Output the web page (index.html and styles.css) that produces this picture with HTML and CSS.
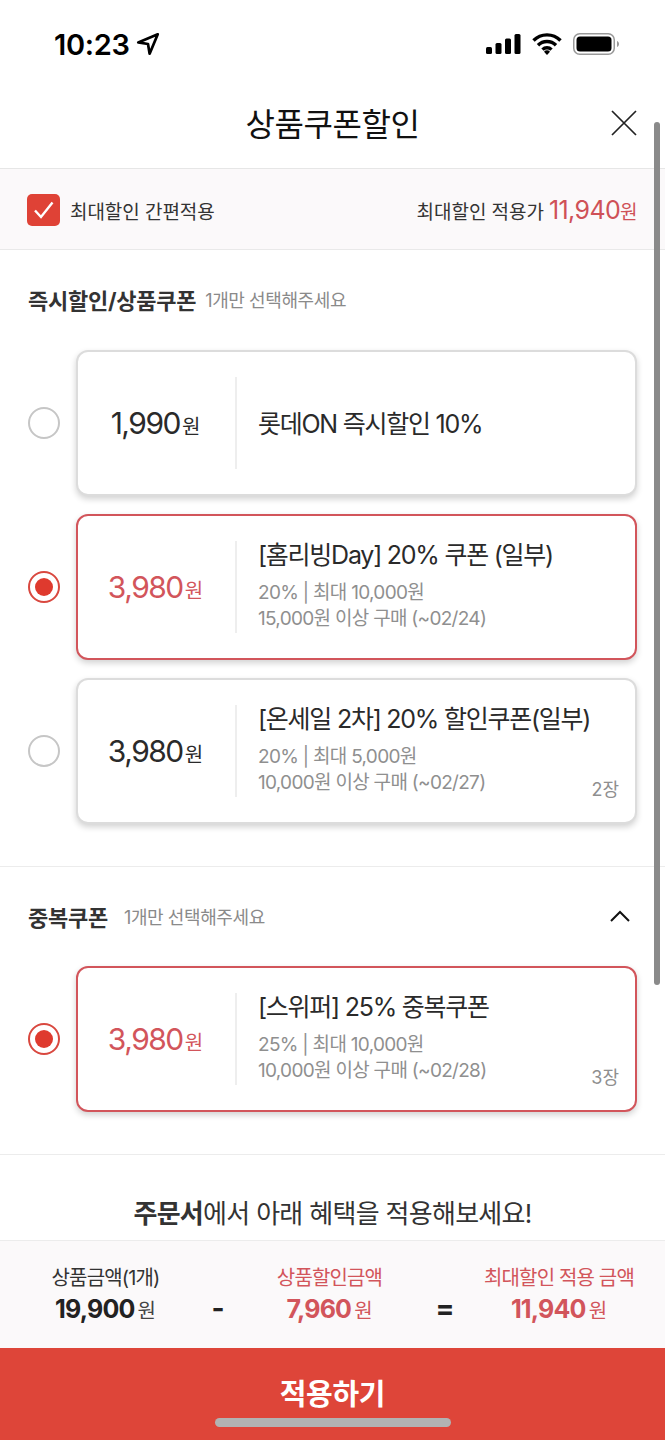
FILE: index.html
```html
<!DOCTYPE html>
<html lang="ko">
<head>
<meta charset="utf-8">
<title>상품쿠폰할인</title>
<link rel="stylesheet" href="styles.css">
</head>
<body>
<div class="screen">
  <div class="status">
    <div class="time"><span>10:23</span>
      <svg class="loc" width="26" height="26" viewBox="0 0 24 24"><path d="M21 3 3 10.5l9 1.5 1.5 9z" fill="none" stroke="#000" stroke-width="2.500" stroke-linejoin="round"/></svg>
    </div>
    <div class="sys">
      <svg width="35" height="22" viewBox="0 0 35 22"><rect x="0" y="14" width="6" height="7" rx="1.5"/><rect x="9.5" y="10" width="6" height="11" rx="1.5"/><rect x="19" y="5.5" width="6" height="15.5" rx="1.5"/><rect x="28.5" y="1" width="6" height="20" rx="1.5"/></svg>
      <svg width="30" height="22" viewBox="0 0 30 22"><path d="M1.5 7.5a19 19 0 0 1 27 0M6 12.3a12.7 12.7 0 0 1 18 0M10.5 16.6a6.4 6.4 0 0 1 9 0" fill="none" stroke="#000" stroke-width="3.4"/><path d="M15 22l-3-3.3a4 4 0 0 1 6 0z"/></svg>
      <svg width="47" height="22" viewBox="0 0 47 22"><rect x=".75" y=".75" width="40.5" height="20.5" rx="6" fill="none" stroke="#999" stroke-width="1.5"/><rect x="3.5" y="3.5" width="35" height="15" rx="3.5"/><path d="M44 8v6c1.4-.6 2-1.7 2-3s-.6-2.400-2-3z" fill="#999"/></svg>
    </div>
  </div>
  <header class="head">
    <h1>상품쿠폰할인</h1>
    <svg class="close" width="28" height="28" viewBox="0 0 28 28"><path d="M2 2l24 24M26 2 2 26" stroke="#222" stroke-width="1.7" fill="none"/></svg>
  </header>
  <div class="bar">
    <div class="check-label">
      <span class="check"><svg width="33" height="32" viewBox="0 0 33 32"><path d="M8 16.500l6 6.500L25.500 8.500" fill="none" stroke="#fff" stroke-width="2.400"/></svg></span>
      <span>최대할인 간편적용</span>
    </div>
    <div class="best">최대할인 적용가 <span class="best-num">11,940<small>원</small></span></div>
  </div>
  <main class="content">
    <section class="sec sec-first">
      <div class="sec-head"><strong>즉시할인/상품쿠폰</strong><span>1개만 선택해주세요</span></div>
      <div class="list">
        <div class="row">
          <span class="radio"></span>
          <div class="card">
            <div class="amount"><b>1,990</b><i>원</i></div>
            <div class="info"><p class="name">롯데ON 즉시할인 10%</p></div>
          </div>
        </div>
        <div class="row">
          <span class="radio on"></span>
          <div class="card on">
            <div class="amount"><b>3,980</b><i>원</i></div>
            <div class="info"><p class="name">[홈리빙Day] 20% 쿠폰 (일부)</p><p class="sub">20% | 최대 10,000원</p><p class="sub">15,000원 이상 구매 (~02/24)</p></div>
          </div>
        </div>
        <div class="row">
          <span class="radio"></span>
          <div class="card">
            <div class="amount"><b>3,980</b><i>원</i></div>
            <div class="info"><p class="name">[온세일 2차] 20% 할인쿠폰(일부)</p><p class="sub">20% | 최대 5,000원</p><p class="sub">10,000원 이상 구매 (~02/27)</p></div>
            <span class="qty">2장</span>
          </div>
        </div>
      </div>
    </section>
    <section class="sec sec-second">
      <div class="sec-head"><strong>중복쿠폰</strong><span>1개만 선택해주세요</span>
        <svg class="chev" width="22" height="14" viewBox="0 0 22 14"><path d="M2 12 11 3l9 9" fill="none" stroke="#111" stroke-width="2"/></svg>
      </div>
      <div class="list">
        <div class="row">
          <span class="radio on"></span>
          <div class="card on">
            <div class="amount"><b>3,980</b><i>원</i></div>
            <div class="info"><p class="name">[스위퍼] 25% 중복쿠폰</p><p class="sub">25% | 최대 10,000원</p><p class="sub">10,000원 이상 구매 (~02/28)</p></div>
            <span class="qty">3장</span>
          </div>
        </div>
      </div>
    </section>
    <p class="notice"><b>주문서</b>에서 아래 혜택을 적용해보세요!</p>
  </main>
  <div class="summary">
    <div class="col c1"><p class="lbl">상품금액(1개)</p><p class="val"><b>19,900</b><i>원</i></p></div>
    <span class="op minus">-</span>
    <div class="col c2 red"><p class="lbl">상품할인금액</p><p class="val"><b>7,960</b><i>원</i></p></div>
    <span class="op equals">=</span>
    <div class="col c3 red"><p class="lbl">최대할인 적용 금액</p><p class="val"><b>11,940</b><i>원</i></p></div>
  </div>
  <div class="apply">적용하기<span class="home"></span></div>
  <span class="scroll"></span>
</div>
</body>
</html>
```
FILE: styles.css
```css
* { box-sizing: border-box; margin: 0; padding: 0; }
html, body { background: #fff; }
body { font-family: "Inter", "Noto Sans CJK KR", sans-serif; color: #222; }
i { font-style: normal; }
.screen { width: 665px; height: 1440px; display: flex; flex-direction: column; overflow: hidden; position: relative; }

.status { height: 84px; flex: none; display: flex; justify-content: space-between; align-items: center; padding: 4px 45px 0 54px; }
.time { display: flex; align-items: center; gap: 5px; font-size: 29px; font-weight: 600; color: #000; letter-spacing: -.3px; }
.sys { display: flex; align-items: center; gap: 11px; }

.head { height: 85px; flex: none; display: flex; align-items: center; justify-content: center; position: relative; border-bottom: 1px solid #e6e6e6; padding-bottom: 9px; }
.head h1 { font-size: 32px; font-weight: 400; color: #111; letter-spacing: -.4px; }
.close { position: absolute; right: 27px; top: 25px; }

.bar { height: 81px; flex: none; display: flex; align-items: center; justify-content: space-between; padding: 2px 28px 0 27px; background: #fbf9fa; border-bottom: 1px solid #e9e9e9; font-size: 19px; color: #333; letter-spacing: -.05px; }
.check-label { display: flex; align-items: center; gap: 10px; }
.check { width: 33px; height: 32px; border-radius: 5px; background: #df4236; display: block; }
.check svg { display: block; }
.best { display: flex; align-items: baseline; gap: 5px; }
.best-num { font-size: 25px; color: #cf5157; letter-spacing: -.6px; }
.best-num small { font-size: 19px; }

.content { flex: 1; min-height: 0; position: relative; overflow: hidden; }
.sec { padding: 0 28px; border-bottom: 1px solid #ececec; }
.sec-first { padding-top: 32px; padding-bottom: 42px; }
.sec-second { padding-top: 32px; padding-bottom: 42px; }
.sec-head { display: flex; align-items: center; gap: 9px; height: 34px; position: relative; }
.sec-head strong { font-size: 22px; font-weight: 700; color: #333; letter-spacing: -.25px; }
.sec-head span { font-size: 18px; color: #8a8a8a; letter-spacing: -.4px; }
.sec-second .sec-head span { margin-left: 7px; }
.chev { position: absolute; right: 6px; top: 10px; }
.list { display: flex; flex-direction: column; gap: 18px; margin-top: 34px; }
.sec-second .list { margin-top: 33px; }
.row { display: flex; align-items: center; gap: 16px; }
.radio { width: 32px; height: 32px; flex: none; border-radius: 50%; border: 2px solid #c6c6c6; display: flex; align-items: center; justify-content: center; }
.radio.on { border: 2px solid #d9483f; }
.radio.on::after { content: ""; width: 18px; height: 18px; border-radius: 50%; background: #df3a2e; }
.card { flex: 1; height: 146px; border-radius: 12px; border: 2px solid #dcdcdc; background: #fff; box-shadow: 0 3px 6px rgba(0,0,0,.18); display: flex; align-items: center; position: relative; }
.card.on { border-color: #d2555b; color: #d2555b; }
.amount { width: 161px; height: 92px; flex: none; border-right: 2px solid #eeeeee; display: flex; align-items: center; justify-content: center; gap: 2px; margin-left: -2px; color: #2a2a2a; }
.on .amount { color: #d2555b; }
.amount b { font-size: 30px; font-weight: 400; letter-spacing: -1.5px; }
.amount i { font-size: 20px; padding-top: 4px; }
.info { padding-left: 21px; }
.name { font-size: 25px; line-height: 32px; color: #2a2a2a; letter-spacing: -1.25px; white-space: nowrap; }
.name:only-child { margin-top: 2px; }
.sub { font-size: 19px; line-height: 26px; color: #8f8f8f; letter-spacing: -.7px; white-space: nowrap; }
.name + .sub { margin-top: 9px; }
.sub:last-child { margin-bottom: 4px; }
.qty { position: absolute; right: 16px; bottom: 21px; font-size: 18px; color: #8f8f8f; }

.notice { text-align: center; font-size: 26px; line-height: 34px; color: #333; letter-spacing: -.7px; margin-top: 42px; }
.notice b { font-weight: 700; }
.scroll { position: absolute; left: 654px; top: 122px; width: 6px; height: 863px; border-radius: 3px; background: #8a8a8a; }

.summary { height: 108px; flex: none; display: flex; align-items: center; background: #fbf9fa; border-top: 1px solid #ececec; padding-top: 5px; }
.col { text-align: center; flex: none; }
.c1 { width: 211px; }
.c2 { width: 209px; }
.c3 { width: 206px; }
.op { flex: none; text-align: center; font-size: 28px; font-weight: 700; color: #222; margin-top: 21px; }
.minus { width: 14px; }
.equals { width: 22px; }
.lbl { font-size: 20px; line-height: 28px; letter-spacing: -.85px; color: #333; white-space: nowrap; }
.val { line-height: 36px; margin-top: -1px; color: #222; }
.val b { font-size: 25px; font-weight: 700; letter-spacing: -.8px; }
.val i { font-size: 20px; margin-left: 3px; color: #444; }
.red .lbl, .red .val b, .red .val i { color: #d2555b; }

.apply { height: 92px; flex: none; background: #de4539; color: #fff; font-size: 29px; font-weight: 600; text-align: center; padding-top: 23px; letter-spacing: -.3px; position: relative; }
.home { position: absolute; left: 215px; top: 70px; width: 236px; height: 9px; border-radius: 5px; background: #b2b2b2; }
```
